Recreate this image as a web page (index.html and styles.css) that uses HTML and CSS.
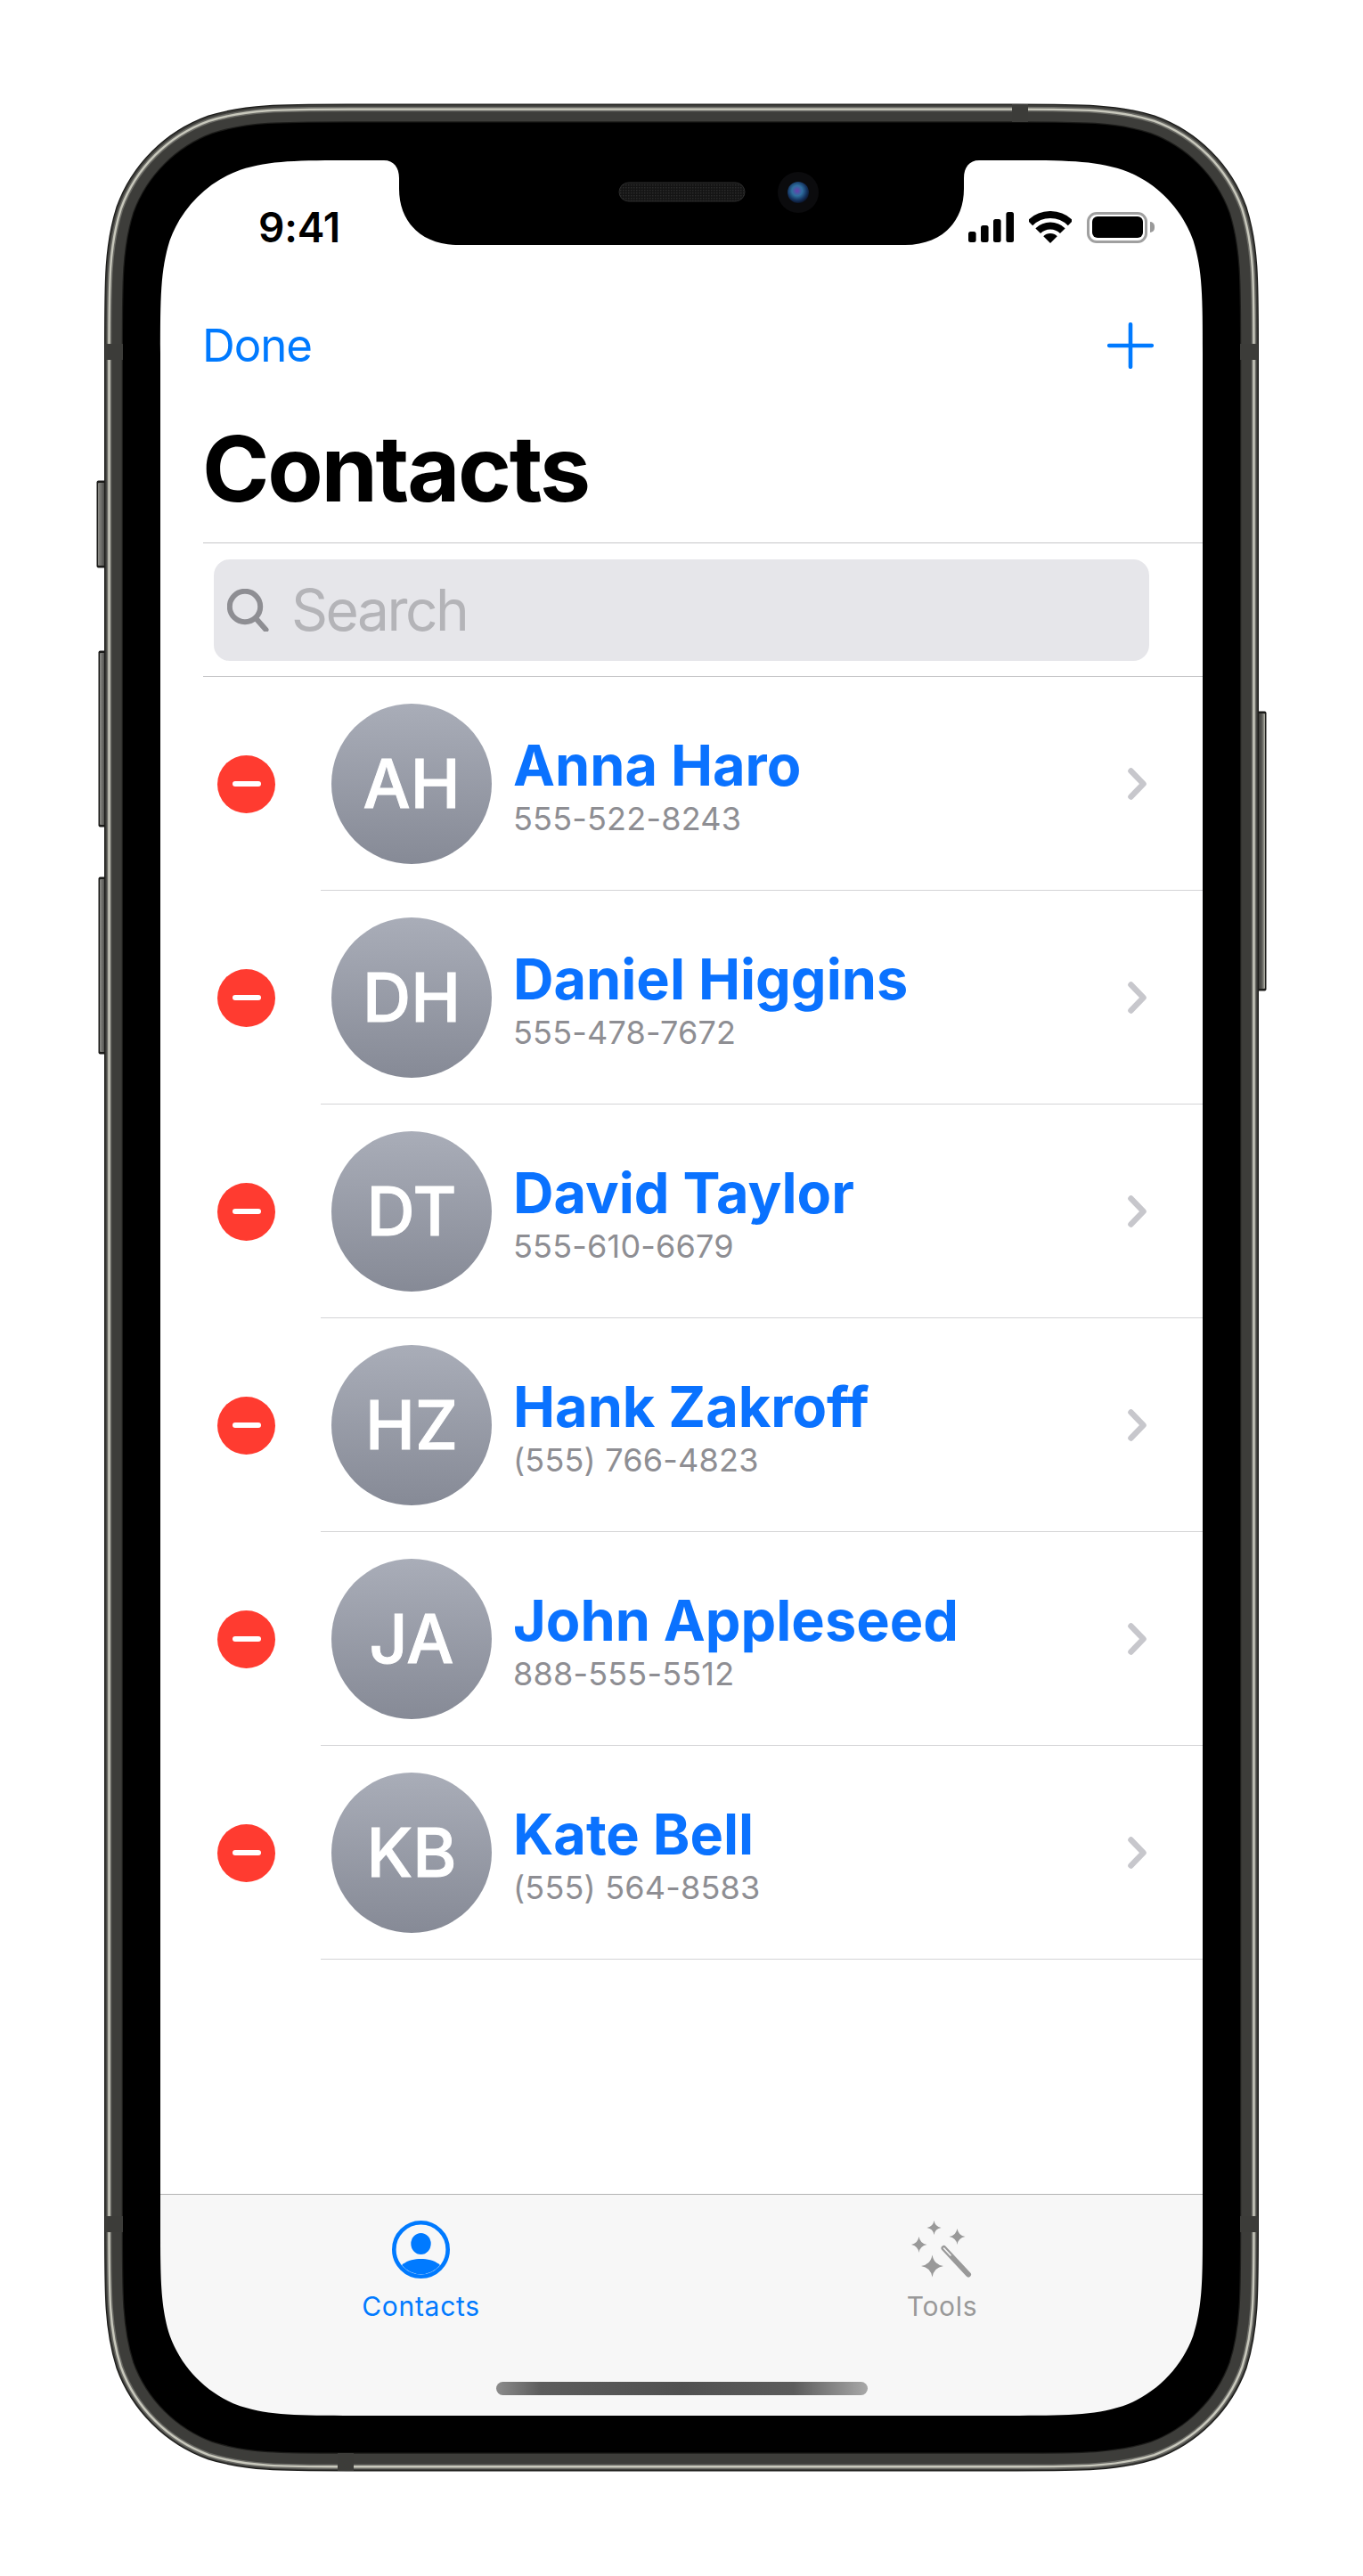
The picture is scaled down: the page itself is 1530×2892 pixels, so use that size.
FILE: index.html
```html
<!DOCTYPE html>
<html lang="en">
<head>
<meta charset="utf-8">
<title>Contacts</title>
<link rel="stylesheet" href="styles.css">
</head>
<body>
<div class="device">
  <main class="screen">
    <header class="statusbar">
      <span class="time">9:41</span>
      <div class="status-icons">
        <svg class="signal" viewBox="0 0 51 34" width="51" height="34"><rect x="0" y="22" width="8.6" height="12" rx="2.5"/><rect x="14" y="15" width="8.6" height="19" rx="2.5"/><rect x="28" y="8" width="8.6" height="26" rx="2.5"/><rect x="42.4" y="0" width="8.6" height="34" rx="2.5"/></svg>
        <svg class="wifi" viewBox="0 0 48 36" width="48" height="36"><path class="wifi-arc" d="M1.37 13.37A32 32 0 0 1 46.63 13.37"/><path class="wifi-arc" d="M10.21 22.21A19.5 19.5 0 0 1 37.79 22.21"/><path d="M24 36L16.22 28.22A11 11 0 0 1 31.78 28.22Z"/></svg>
        <div class="battery"><div class="battery-level"></div></div>
        <div class="battery-nub"></div>
      </div>
    </header>

    <nav class="navbar">
      <span class="done">Done</span>
      <svg class="plus" viewBox="0 0 52 52" width="52" height="52"><path d="M26 2.2V49.8M2.2 26H49.8"/></svg>
    </nav>
    <h1 class="title">Contacts</h1>

    <div class="search-wrap">
      <div class="search">
        <svg class="search-icon" viewBox="0 0 48 48" width="48" height="48"><circle cx="20" cy="20" r="17.2"/><path d="M32 33L43.5 46"/></svg>
        <span class="search-text">Search</span>
      </div>
    </div>

    <section class="list">
      <article class="row">
        <div class="delete-col"><span class="delete"><span class="delete-bar"></span></span></div>
        <div class="row-main">
          <div class="avatar">AH</div>
          <div class="info"><div class="name">Anna Haro</div><div class="phone">555-522-8243</div></div>
          <svg class="chevron" viewBox="0 0 24 40" width="24" height="40"><path d="M6.5 5.5L20.5 20L6.5 34.5"/></svg>
        </div>
      </article>
      <article class="row">
        <div class="delete-col"><span class="delete"><span class="delete-bar"></span></span></div>
        <div class="row-main">
          <div class="avatar">DH</div>
          <div class="info"><div class="name">Daniel Higgins</div><div class="phone">555-478-7672</div></div>
          <svg class="chevron" viewBox="0 0 24 40" width="24" height="40"><path d="M6.5 5.5L20.5 20L6.5 34.5"/></svg>
        </div>
      </article>
      <article class="row">
        <div class="delete-col"><span class="delete"><span class="delete-bar"></span></span></div>
        <div class="row-main">
          <div class="avatar">DT</div>
          <div class="info"><div class="name">David Taylor</div><div class="phone">555-610-6679</div></div>
          <svg class="chevron" viewBox="0 0 24 40" width="24" height="40"><path d="M6.5 5.5L20.5 20L6.5 34.5"/></svg>
        </div>
      </article>
      <article class="row">
        <div class="delete-col"><span class="delete"><span class="delete-bar"></span></span></div>
        <div class="row-main">
          <div class="avatar">HZ</div>
          <div class="info"><div class="name">Hank Zakroff</div><div class="phone">(555) 766-4823</div></div>
          <svg class="chevron" viewBox="0 0 24 40" width="24" height="40"><path d="M6.5 5.5L20.5 20L6.5 34.5"/></svg>
        </div>
      </article>
      <article class="row">
        <div class="delete-col"><span class="delete"><span class="delete-bar"></span></span></div>
        <div class="row-main">
          <div class="avatar">JA</div>
          <div class="info"><div class="name">John Appleseed</div><div class="phone">888-555-5512</div></div>
          <svg class="chevron" viewBox="0 0 24 40" width="24" height="40"><path d="M6.5 5.5L20.5 20L6.5 34.5"/></svg>
        </div>
      </article>
      <article class="row">
        <div class="delete-col"><span class="delete"><span class="delete-bar"></span></span></div>
        <div class="row-main">
          <div class="avatar">KB</div>
          <div class="info"><div class="name">Kate Bell</div><div class="phone">(555) 564-8583</div></div>
          <svg class="chevron" viewBox="0 0 24 40" width="24" height="40"><path d="M6.5 5.5L20.5 20L6.5 34.5"/></svg>
        </div>
      </article>
    </section>

    <footer class="tabbar">
      <div class="tabs">
        <div class="tab tab-active">
          <svg class="tab-icon" viewBox="0 0 65 65" width="65" height="65">
            <circle class="contact-ring" cx="32.5" cy="32.5" r="30.2"/>
            <ellipse cx="32.5" cy="26" rx="11.2" ry="12"/>
            <path d="M11 50C17 44.5 25 43 32.5 43C40 43 48 44.5 54 50A27.7 27.7 0 0 1 11 50Z"/>
          </svg>
          <span class="tab-label">Contacts</span>
        </div>
        <div class="tab">
          <svg class="tab-icon" viewBox="0 0 70 65" width="70" height="65">
            <defs><path id="spark" d="M0-1Q.14-.14 1 0Q.14.14 0 1Q-.14.14-1 0Q-.14-.14 0-1Z"/></defs>
            <use href="#spark" transform="translate(25.5 8) scale(8)"/>
            <use href="#spark" transform="translate(51.5 18) scale(9)"/>
            <use href="#spark" transform="translate(8.5 27) scale(9)"/>
            <use href="#spark" transform="translate(23.5 51) scale(12.5)"/>
            <path class="wand" d="M36.5 31L64 60.5"/>
            <path class="wand-glint" d="M36.5 31L44 39"/>
          </svg>
          <span class="tab-label">Tools</span>
        </div>
      </div>
      <div class="home-indicator"></div>
    </footer>
  </main>

  <svg class="hardware" viewBox="0 0 1530 2892" width="1530" height="2892" aria-hidden="true">
    <defs>
      <linearGradient id="btnV" x1="0" y1="0" x2="1" y2="0">
        <stop offset="0" stop-color="#8b8b86"/><stop offset=".45" stop-color="#6a6a66"/><stop offset="1" stop-color="#3a3a37"/>
      </linearGradient>
      <linearGradient id="btnR" x1="0" y1="0" x2="1" y2="0">
        <stop offset="0" stop-color="#333331"/><stop offset=".6" stop-color="#5c5c58"/><stop offset="1" stop-color="#b4b4aa"/>
      </linearGradient>
      <radialGradient id="lens" cx=".45" cy=".42" r=".6">
        <stop offset="0" stop-color="#6a3fae"/><stop offset=".4" stop-color="#2f6f9f"/><stop offset=".75" stop-color="#14325e"/><stop offset="1" stop-color="#0a1226"/>
      </radialGradient>
      <pattern id="mesh" width="3" height="3" patternUnits="userSpaceOnUse"><rect width="3" height="3" fill="#141414"/><rect width="1.5" height="1.5" fill="#2a2a2a"/></pattern>
      <path id="bandPath" d="M127.5 389.93c0-75.71 0-113.56 12.88-154.31c16.2-44.49 51.25-79.54 95.74-95.74c40.75-12.88 78.6-12.88 154.31-12.88h749.14c75.71 0 113.56 0 154.31 12.88c44.49 16.2 79.54 51.25 95.74 95.74c12.88 40.75 12.88 78.6 12.88 154.31v2111.14c0 75.71 0 113.56-12.88 154.31c-16.2 44.49-51.25 79.54-95.74 95.74c-40.75 12.88-78.6 12.88-154.31 12.88h-749.14c-75.71 0-113.56 0-154.31-12.88c-44.49-16.2-79.54-51.25-95.74-95.74c-12.88-40.75-12.88-78.6-12.88-154.31z"/>
      <path id="glossPath" d="M122.5 393.17c0-77.91 0-116.86 13.26-158.8c16.66-45.78 52.73-81.85 98.51-98.51c41.94-13.26 80.89-13.26 158.8-13.26h743.86c77.91 0 116.86 0 158.8 13.26c45.78 16.66 81.85 52.73 98.51 98.51c13.26 41.94 13.26 80.89 13.26 158.8v2105.56c0 77.91 0 116.86-13.26 158.8c-16.66 45.78-52.73 81.85-98.51 98.51c-41.94 13.26-80.89 13.26-158.8 13.26h-743.86c-77.91 0-116.86 0-158.8-13.26c-45.78-16.66-81.85-52.73-98.51-98.51c-13.26-41.94-13.26-80.89-13.26-158.8z"/>
    </defs>

    <!-- side buttons -->
    <rect class="btn-edge" x="108.5" y="539.5" width="12" height="98" rx="2"/>
    <rect class="btn-left" x="110" y="542" width="9" height="93" rx="1"/>
    <rect class="btn-edge" x="110.5" y="730.5" width="10" height="198" rx="2"/>
    <rect class="btn-left" x="112" y="733" width="7" height="193" rx="1"/>
    <rect class="btn-edge" x="110.5" y="984.5" width="10" height="199" rx="2"/>
    <rect class="btn-left" x="112" y="987" width="7" height="194" rx="1"/>
    <rect class="btn-edge" x="1410" y="798.5" width="11.5" height="314" rx="2"/>
    <rect class="btn-right" x="1412" y="801" width="8" height="309" rx="1"/>

    <!-- body: black glass with a hole for the display and its notch -->
    <path class="glass" fill-rule="evenodd" d="M127.5 389.93c0-75.71 0-113.56 12.88-154.31c16.2-44.49 51.25-79.54 95.74-95.74c40.75-12.88 78.6-12.88 154.31-12.88h749.14c75.71 0 113.56 0 154.31 12.88c44.49 16.2 79.54 51.25 95.74 95.74c12.88 40.75 12.88 78.6 12.88 154.31v2111.14c0 75.71 0 113.56-12.88 154.31c-16.2 44.49-51.25 79.54-95.74 95.74c-40.75 12.88-78.6 12.88-154.31 12.88h-749.14c-75.71 0-113.56 0-154.31-12.88c-44.49-16.2-79.54-51.25-95.74-95.74c-12.88-40.75-12.88-78.6-12.88-154.31z
      M180 397.07c0-62.5 0-93.76 10.64-127.4c13.37-36.73 42.3-65.66 79.03-79.03c33.64-10.64 64.9-10.64 127.4-10.64H431C442 180 448 188 448 200V212C448 250 474 275 514 275H1016C1056 275 1082 250 1082 212V200C1082 188 1088 180 1099 180H1132.93c62.5 0 93.76 0 127.4 10.64c36.73 13.37 65.66 42.3 79.03 79.03c10.64 33.64 10.64 64.9 10.64 127.4v2097.86c0 62.5 0 93.76-10.64 127.4c-13.37 36.73-42.3 65.66-79.03 79.03c-33.64 10.64-64.9 10.64-127.4 10.64H397.07c-62.5 0-93.76 0-127.4-10.64c-36.73-13.37-65.66-42.3-79.03-79.03c-10.64-33.64-10.64-64.9-10.64-127.4z"/>

    <!-- metal band -->
    <use href="#bandPath" class="band-edge"/>
    <use href="#bandPath" class="band"/>
    <use href="#glossPath" class="gloss-soft"/>
    <use href="#glossPath" class="gloss"/>

    <!-- antenna breaks -->
    <rect class="antenna" x="1136" y="117" width="18" height="20"/>
    <rect class="antenna" x="379" y="2754" width="18" height="20"/>
    <rect class="antenna" x="118" y="386" width="20" height="18"/>
    <rect class="antenna" x="1392" y="386" width="20" height="18"/>
    <rect class="antenna" x="118" y="2488" width="20" height="18"/>
    <rect class="antenna" x="1392" y="2488" width="20" height="18"/>

    <!-- speaker and camera -->
    <rect class="speaker" x="695" y="205" width="141" height="21" rx="10.5"/>
    <circle class="cam-halo" cx="896" cy="216" r="23"/>
    <ellipse class="cam-lens" cx="896" cy="216" rx="12" ry="12"/>
  </svg>
</div>
</body>
</html>
```
FILE: styles.css
```css
* { box-sizing: border-box; }
html, body { margin: 0; padding: 0; background: #fff; }
body { font-family: Inter, "Liberation Sans", sans-serif; }

.device { position: relative; width: 1530px; height: 2892px; padding: 180px; }
.hardware { position: absolute; left: 0; top: 0; pointer-events: none; }

.screen { width: 1170px; height: 2532px; display: flex; flex-direction: column; background: #fff; }

/* status bar */
.statusbar { height: 150px; flex: none; display: flex; align-items: center; justify-content: space-between; padding: 0 54px 0 110px; }
.time { font-size: 46px; font-weight: 600; line-height: 50px; color: #000; letter-spacing: -0.2px; }
.status-icons { display: flex; align-items: center; }
.signal { fill: #000; display: block; }
.wifi { fill: #000; display: block; margin-left: 17px; }
.wifi-arc { fill: none; stroke: #000; stroke-width: 8; }
.battery { width: 68px; height: 35px; margin-left: 17px; border: 3.5px solid #a0a0a0; border-radius: 11px; padding: 2.5px; }
.battery-level { width: 100%; height: 100%; background: #000; border-radius: 6px; }
.battery-nub { width: 5px; height: 12px; margin-left: 3px; background: #999; border-radius: 0 6px 6px 0; }

/* navigation */
.navbar { height: 116px; flex: none; display: flex; align-items: center; justify-content: space-between; padding: 0 55px 0 47px; }
.done { font-size: 51px; line-height: 60px; color: #007aff; letter-spacing: -1.1px; }
.plus { display: block; fill: none; stroke: #007aff; stroke-width: 4.6; stroke-linecap: round; }
.title { margin: 0 0 3px 47px; height: 160px; font-size: 102px; line-height: 160px; font-weight: 700; color: #000; letter-spacing: -2.3px; }

/* search */
.search-wrap { flex: none; margin-left: 48px; padding: 18px 60px 17px 12px; border-top: 1px solid #c6c6c8; border-bottom: 1px solid #c6c6c8; }
.search { height: 114px; display: flex; align-items: center; background: #e6e6ea; border-radius: 18px; padding-left: 15px; }
.search-icon { display: block; flex: none; fill: none; stroke: #8e8e93; stroke-width: 6; stroke-linecap: round; }
.search-text { margin-left: 24px; font-size: 64px; line-height: 80px; color: #b4b4b8; letter-spacing: -2.5px; }

/* contact rows */
.list { flex: none; }
.row { height: 240px; display: flex; }
.delete-col { width: 180px; flex: none; display: flex; align-items: center; padding-left: 64px; }
.delete { width: 65px; height: 65px; border-radius: 50%; background: #ff3b30; display: flex; align-items: center; justify-content: center; }
.delete-bar { width: 32px; height: 5.5px; border-radius: 3px; background: #fff; }
.row-main { flex: 1; display: flex; align-items: center; padding: 0 63px 0 12px; border-bottom: 1px solid #d4d4d6; }
.avatar { width: 180px; height: 180px; flex: none; border-radius: 50%; background: linear-gradient(#a9adb8, #868a96); color: #fff; font-size: 75px; font-weight: 500; -webkit-text-stroke: 1px #fff; display: flex; align-items: center; justify-content: center; }
.info { flex: 1; margin-left: 24px; padding-top: 18px; }
.name { font-size: 63px; line-height: 60px; font-weight: 700; color: #0a72ff; letter-spacing: 0; }
.phone { font-size: 36px; line-height: 60px; color: #8e8e93; letter-spacing: 0.2px; }
.chevron { display: block; flex: none; fill: none; stroke: #c7c7cc; stroke-width: 6.5; stroke-linecap: round; stroke-linejoin: round; }

/* tab bar */
.tabbar { margin-top: auto; height: 249px; flex: none; display: flex; flex-direction: column; background: #f7f7f7; border-top: 1px solid #b3b3b3; }
.tabs { display: grid; grid-template-columns: 1fr 1fr; padding-top: 29px; }
.tab { display: flex; flex-direction: column; align-items: center; fill: #999; color: #999; }
.tab-active { fill: #007aff; color: #007aff; }
.tab-icon { display: block; }
.contact-ring { fill: none; stroke: #007aff; stroke-width: 4.6; }
.wand { fill: none; stroke: #999; stroke-width: 6; stroke-linecap: round; }
.wand-glint { fill: none; stroke: #f6f6f6; stroke-width: 1.6; stroke-linecap: round; }
.tab-label { margin-top: 13px; font-size: 30px; line-height: 36px; letter-spacing: 0.7px; }
.home-indicator { width: 417px; height: 15px; margin: 67px auto 0; border-radius: 8px; background: linear-gradient(90deg, #8c8c8c, #5c5c5c 12%, #505050 50%, #5c5c5c 80%, #a8a8a8); }

/* device hardware */
.glass { fill: #000; }
.band-edge { fill: none; stroke: #1c1c1a; stroke-width: 21; }
.band { fill: none; stroke: #3d3d3a; stroke-width: 18.5; }
.gloss-soft { fill: none; stroke: #6a6a65; stroke-width: 5.5; }
.gloss { fill: none; stroke: #c8c8bc; stroke-width: 2.4; }
.antenna { fill: #3c3c39; }
.btn-edge { fill: #1c1c1a; }
.btn-left { fill: url(#btnV); }
.btn-right { fill: url(#btnR); }
.speaker { fill: url(#mesh); stroke: #2c2c2c; stroke-width: 1; }
.cam-halo { fill: #0b0b0d; }
.cam-lens { fill: url(#lens); }
```
